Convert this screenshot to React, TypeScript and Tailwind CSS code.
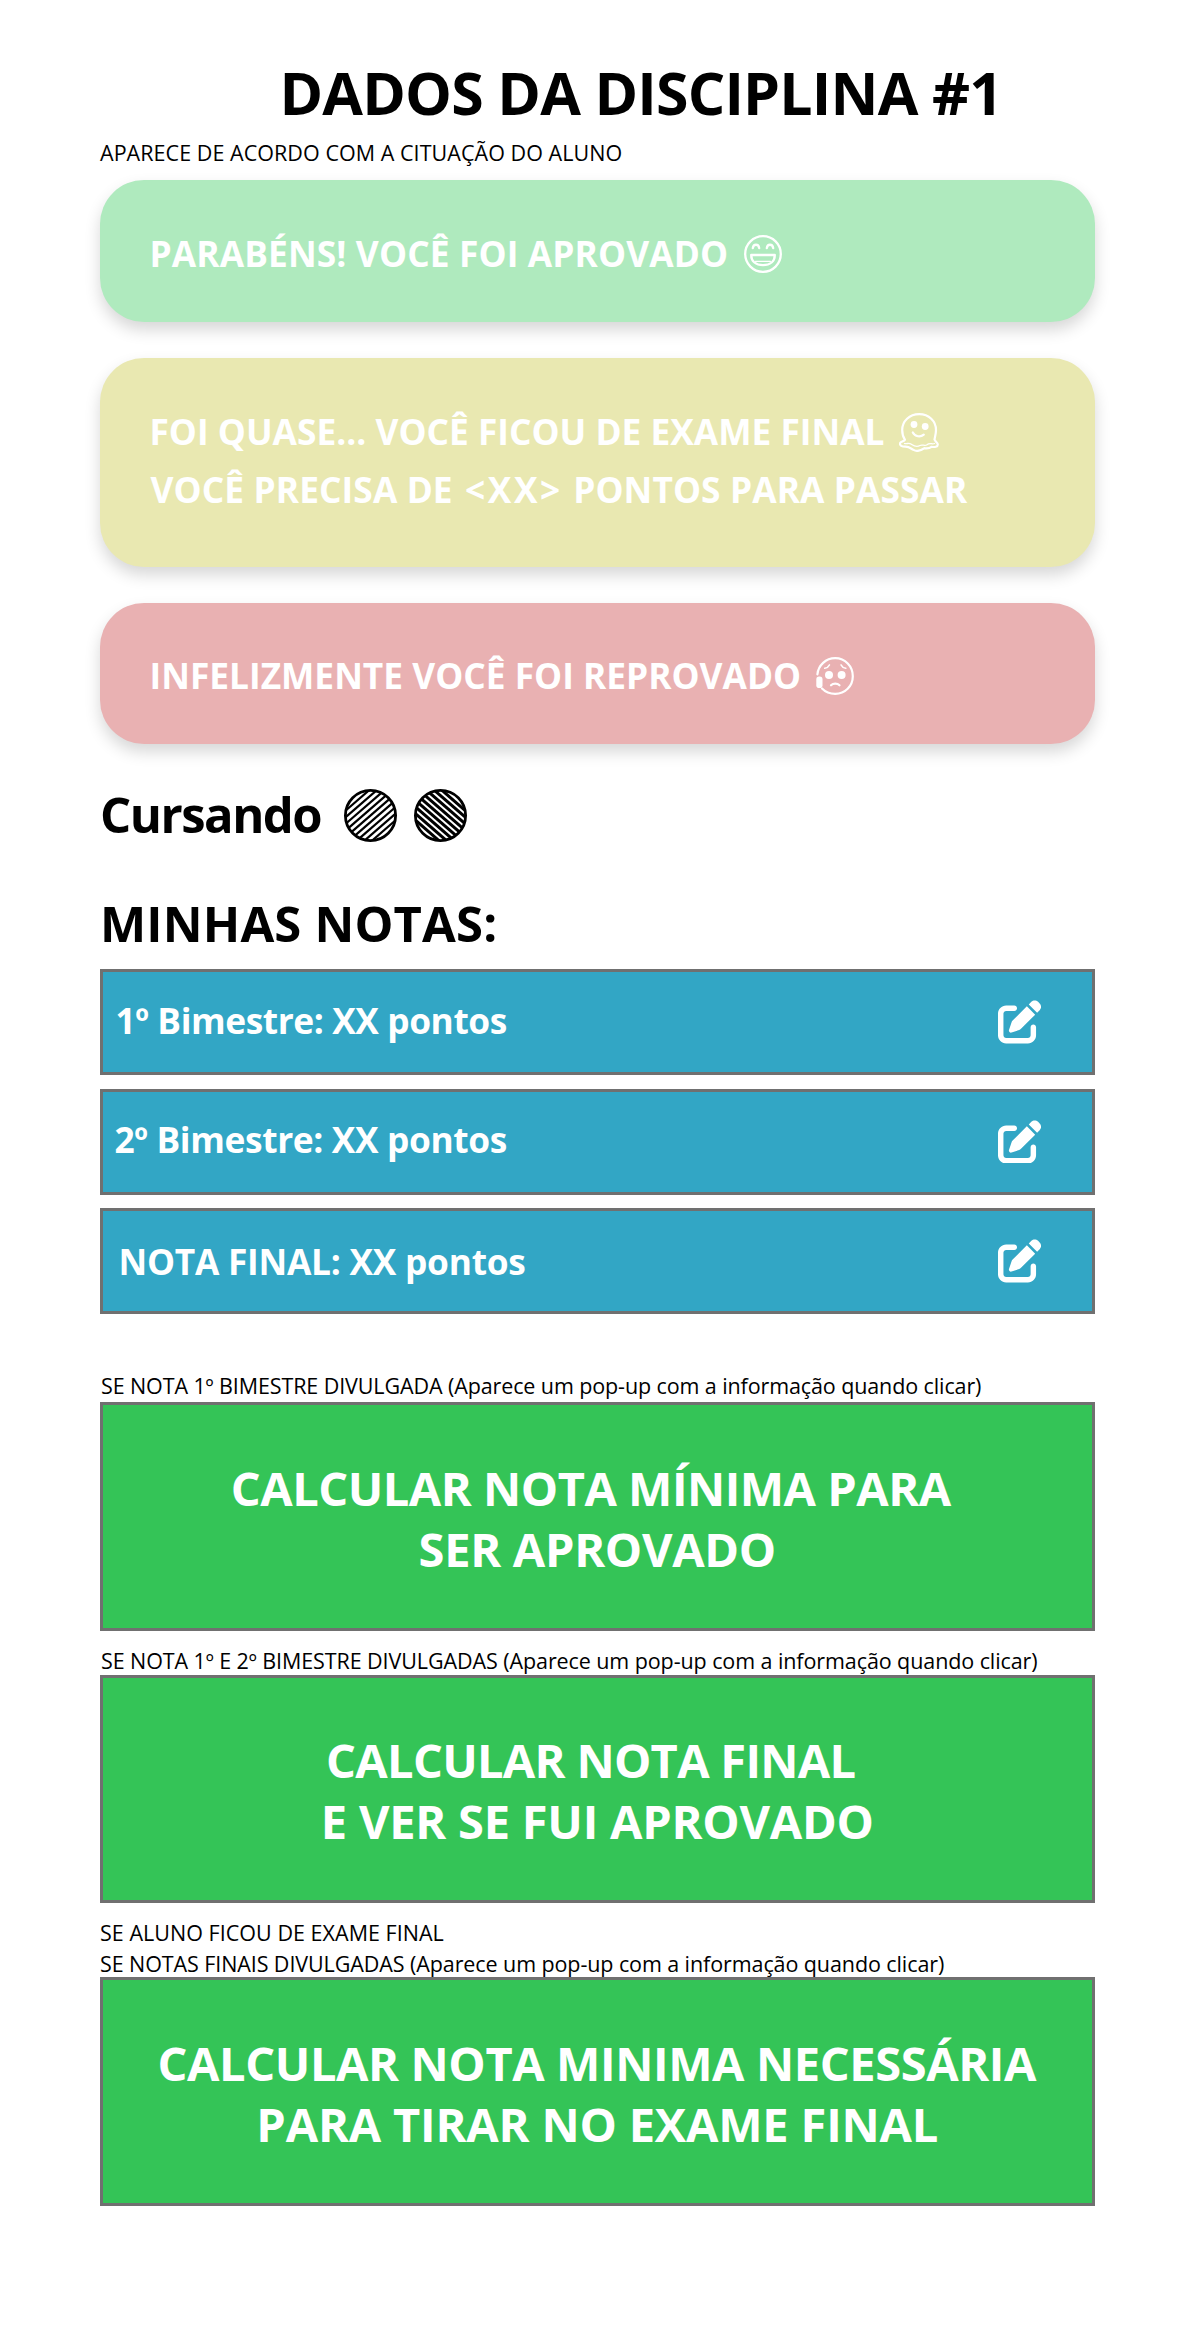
import type { ReactNode } from "react";
import { FaPenToSquare } from "react-icons/fa6";

function GrinIcon() {
  return (
    <svg className="ml-[16px] mt-[2px] h-[38px] w-[38px] shrink-0" viewBox="0 0 38 38" fill="none" stroke="white" strokeWidth="2.300" strokeLinecap="round">
      <circle cx="19" cy="19" r="17.800" />
      <path d="M8.800 13.200c.6-4.600 5.800-4.600 6.400 0M22.800 13.200c.6-4.600 5.800-4.600 6.400 0" />
      <path d="M7.200 20h23.600c0 6.400-4.600 10.200-11.800 10.200S7.200 26.400 7.200 20z" strokeLinejoin="round" />
      <path d="M11.500 26.300h15" strokeWidth="1.300" />
    </svg>
  );
}

function MeltingIcon() {
  return (
    <svg className="ml-[15px] mt-[3px] h-[39px] w-[40px] shrink-0" viewBox="0 0 40 39" fill="none" stroke="white" strokeWidth="2.200" strokeLinecap="round" strokeLinejoin="round">
      <path d="M6 26.800C4 24 3.200 20.500 3.200 17 3.200 8 10.500 1.200 20.200 1.200S37 8 37 17c0 3.500-1 6.500-1.500 9.500.5 2 3.300 3.200 3.300 5 0 2.500-3.300 2.800-6.300 2.300-2.500 2-4.500 1.700-7 1.400-3.500 2.500-7.500 3.600-11 1.700-3-1.600-4.500-3.200-8-3.200-3.700 0-5.900-1.200-5.500-3.400C1.400 28.500 5 28.700 6 26.800z" />
      <path d="M5.500 30.500c2.500.8 4-1.200 6.500.5s5 4 9 1.500c2.500-1.500 4.500 1 7-.8 2.500-2.200 5-.2 7.500-1.200" strokeWidth="1.300" />
      <circle cx="15" cy="11.500" r="3.400" fill="white" stroke="none" />
      <circle cx="26.200" cy="13.500" r="3.400" fill="white" stroke="none" />
      <path d="M13.800 19.500c2.200 4.200 7.500 5 11 2.200" />
    </svg>
  );
}

function SadIcon() {
  return (
    <svg className="ml-[15px] mt-[2px] h-[38px] w-[38px] shrink-0" viewBox="0 0 38 38" fill="none" stroke="white" strokeWidth="2.200" strokeLinecap="round">
      <path d="M1.400 17.300C2.300 8.300 9.800 1.200 19.200 1.200c10 0 17.600 8 17.600 18s-7.800 17.600-17.600 17.600c-5.200 0-9.900-1.900-13.200-5.300" />
      <rect x="0.300" y="19.600" width="6.200" height="11.400" rx="2.800" fill="white" stroke="none" />
      <circle cx="13" cy="18" r="4" fill="white" stroke="none" />
      <circle cx="25.600" cy="18" r="4" fill="white" stroke="none" />
      <path d="M8.700 11.300c2.300-.4 3.800-1.500 4.800-3.500M29.800 11.300c-2.300-.4-3.800-1.500-4.800-3.500" strokeWidth="1.500" />
      <path d="M15 28.300c2.200-2.200 6.300-2.200 8.500 0" />
    </svg>
  );
}

function HatchedCircle({ id, angle, weight }: { id: string; angle: number; weight: number }) {
  const lines = [-20, -15, -10, -5, 0, 5, 10, 15, 20];
  return (
    <svg className="mt-[3px] h-[53px] w-[53px] shrink-0" viewBox="0 0 53 53" fill="none" stroke="black">
      <clipPath id={id}>
        <circle cx="26.500" cy="26.500" r="25" />
      </clipPath>
      <g clipPath={`url(#${id})`} strokeWidth={weight}>
        <g transform={`rotate(${angle} 26.500 26.500)`}>
          {lines.map((y) => (
            <path key={y} d={`M0 ${26.5 + y}H53`} />
          ))}
        </g>
      </g>
      <circle cx="26.500" cy="26.500" r="25.100" strokeWidth="2.800" />
    </svg>
  );
}

function Alert({ className, children }: { className: string; children: ReactNode }) {
  return (
    <div className={`rounded-[44px] pl-[49.5px] text-[35.3px] leading-[58px] font-bold text-white shadow-[0_8px_16px_rgba(0,0,0,0.16)] ${className}`}>
      {children}
    </div>
  );
}

function GradeRow({ className, children }: { className: string; children: ReactNode }) {
  return (
    <div className="flex h-[106px] items-center justify-between border-[3px] border-[#707070] bg-[#32a6c5] pr-[50px] text-white">
      <span className={`text-[35.3px] leading-[58px] font-bold ${className}`}>{children}</span>
      <button type="button" aria-label="Editar">
        <FaPenToSquare className="h-[43.5px] w-[43.5px]" />
      </button>
    </div>
  );
}

function ActionButton({ className, children }: { className: string; children: ReactNode }) {
  return (
    <button type="button" className={`flex w-full flex-col items-center border-[3px] border-[#707070] bg-[#34c457] text-[47px] leading-[61px] font-bold text-white ${className}`}>
      {children}
    </button>
  );
}

export default function App() {
  return (
    <main className="min-h-[2339px] w-full bg-white pt-[62px] pr-[100.5px] pl-[100px] font-['Open_Sans','Noto_Sans',sans-serif] whitespace-nowrap text-black">
      <h1 className="pl-[179.5px] text-[59px] leading-[60px] font-bold tracking-[-0.84px]">DADOS DA DISCIPLINA #1</h1>
      <p className="mt-[16px] text-[21.5px] leading-[30px] tracking-[0.045px]">APARECE DE ACORDO COM A CITUAÇÃO DO ALUNO</p>

      <Alert className="mt-[12px] h-[142px] bg-[#afeabe] pt-[44px]">
        <div className="flex items-center tracking-[0.13px]">
          PARABÉNS! VOCÊ FOI APROVADO
          <GrinIcon />
        </div>
      </Alert>
      <Alert className="mt-[36px] h-[209px] bg-[#e9e8b1] pt-[44px]">
        <div className="flex h-[58px] items-center">
          FOI QUASE... VOCÊ FICOU DE EXAME FINAL
          <MeltingIcon />
        </div>
        <div className="pl-[1px] tracking-[0.1px]">
          VOCÊ PRECISA DE <span className="mr-[1px] ml-[3px] tracking-[2.6px]">&lt;XX&gt;</span> PONTOS PARA PASSAR
        </div>
      </Alert>
      <Alert className="mt-[36px] h-[141px] bg-[#e9b1b2] pt-[43px]">
        <div className="flex items-center">
          INFELIZMENTE VOCÊ FOI REPROVADO
          <SadIcon />
        </div>
      </Alert>

      <div className="mt-[40px] flex h-[60px] items-center">
        <span className="mr-[23px] text-[49px] leading-[60px] font-bold tracking-[-1.5px]">Cursando</span>
        <HatchedCircle id="hatch-up" angle={-41} weight={2.2} />
        <span className="w-[17px]" />
        <HatchedCircle id="hatch-down" angle={41} weight={3} />
      </div>

      <h2 className="mt-[49px] text-[49px] leading-[60px] font-bold tracking-[0.16px]">MINHAS NOTAS:</h2>
      <div className="mt-[16px] flex flex-col gap-[13.5px]">
        <GradeRow className="pb-[5px] pl-[12.5px] tracking-[-0.41px]">1º Bimestre: XX pontos</GradeRow>
        <GradeRow className="pb-[5px] pl-[11.5px] tracking-[-0.36px]">2º Bimestre: XX pontos</GradeRow>
        <GradeRow className="pl-[15.5px] tracking-[-0.25px]">NOTA FINAL: XX pontos</GradeRow>
      </div>

      <p className="mt-[57px] h-[31px] pl-[1px] text-[21.5px] leading-[30px] tracking-[-0.106px]">
        SE NOTA 1º BIMESTRE DIVULGADA (Aparece um pop-up com a informação quando clicar)
      </p>
      <ActionButton className="h-[229px] pt-[53px]">
        <span className="pr-[13px] tracking-[-0.49px]">CALCULAR NOTA MÍNIMA PARA</span>
        <span className="tracking-[-0.3px]">SER APROVADO</span>
      </ActionButton>

      <p className="mt-[15px] h-[29px] pl-[1px] text-[21.5px] leading-[30px] tracking-[-0.087px]">
        SE NOTA 1º E 2º BIMESTRE DIVULGADAS (Aparece um pop-up com a informação quando clicar)
      </p>
      <ActionButton className="h-[228px] pt-[52px]">
        <span className="pr-[13px] tracking-[-0.7px]">CALCULAR NOTA FINAL</span>
        <span className="tracking-[-0.23px]">E VER SE FUI APROVADO</span>
      </ActionButton>

      <div className="mt-[15px] h-[59px] text-[21.5px] leading-[30.5px]">
        <p className="tracking-[0.03px]">SE ALUNO FICOU DE EXAME FINAL</p>
        <p className="tracking-[-0.09px]">SE NOTAS FINAIS DIVULGADAS (Aparece um pop-up com a informação quando clicar)</p>
      </div>
      <ActionButton className="h-[229px] pt-[53px]">
        <span className="pr-px tracking-[-0.39px]">CALCULAR NOTA MINIMA NECESSÁRIA</span>
        <span className="tracking-[-0.18px]">PARA TIRAR NO EXAME FINAL</span>
      </ActionButton>
    </main>
  );
}
